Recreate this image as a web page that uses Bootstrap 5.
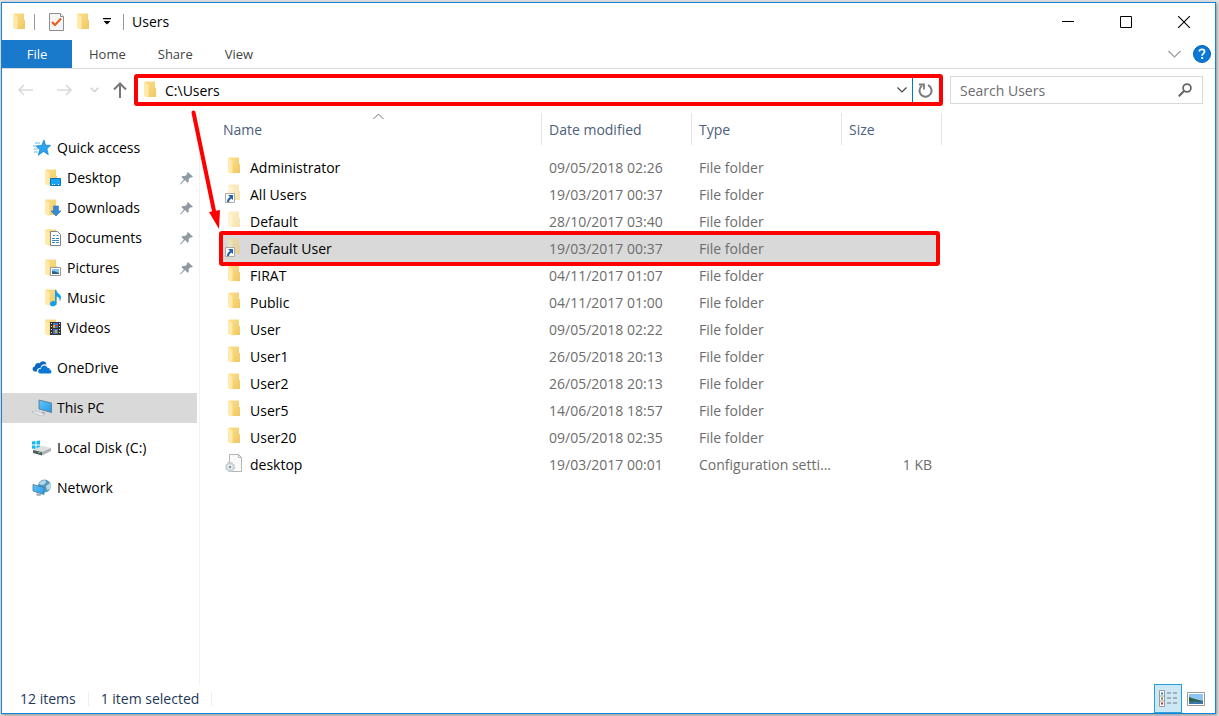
<!DOCTYPE html>
<html lang="en">
<head>
<meta charset="utf-8">
<meta name="viewport" content="width=device-width, initial-scale=1">
<title>Users</title>
<link rel="stylesheet" href="https://cdn.jsdelivr.net/npm/bootstrap@5.3.0/dist/css/bootstrap.min.css">
<style>
  body { background: #e2e2e2; font-family: "Open Sans", "Noto Sans", sans-serif; font-size: 14px; line-height: 20px; color: #000; padding: 2px 3px 2px 1px; }
  svg { display: block; flex: none; }
  button { border: 0; background: none; padding: 0; }
  .explorer { min-height: calc(100vh - 4px); background: #fff; border: 1px solid #1883d7; box-shadow: 1px 1px 3px #888; }
  .title-row { height: 37px; padding: 0 2px 0 11px; }
  .divider { width: 1px; height: 16px; background: #999; }
  .quick-tools { gap: 9px; padding: 0 12px 0 14px; }
  .win-btn { width: 58px; height: 37px; display: grid; place-items: center; }
  .ribbon { height: 29px; border-bottom: 1px solid #dadbdc; }
  .ribbon .nav-link { height: 28px; padding: 4px 16px; font-size: 13px; color: #444; }
  .ribbon .file-tab { width: 70px; background: #1979ca; color: #fff; text-align: center; padding: 4px 0; margin-right: 1px; }
  .address-row { padding: 5px 12px 7px 0; }
  .nav-btn { height: 32px; display: grid; place-items: center; }
  .w-back { width: 48px; } .w-forward { width: 28px; } .w-recent { width: 32px; } .w-up { width: 24px; padding-right: 4px; }
  .address-box { height: 32px; border: 4px solid #f00; border-radius: 3px; background: #fff; padding-left: 6px; }
  .address-box input, .search-box input { border: 0; outline: 0; background: none; padding: 0; min-width: 0; height: 24px; }
  .refresh { width: 27px; padding-right: 1px; border-left: 1px solid #0078d7; }
  .search-box { width: 253px; height: 28px; border: 1px solid #d9d9d9; margin-left: 7px; padding: 0 10px 0 9px; }
  .search-box input::placeholder { color: #6d6d6d; opacity: 1; }
  .side { width: 198px; border-right: 1px solid #f2f2f2; padding-top: 20px; }
  .side a { height: 30px; width: 195px; color: #000; text-decoration: none; display: flex; align-items: center; padding: 0 4px 0 30px; }
  .side a.sub { padding-left: 43px; }
  .side a.picked { background: #d9d9d9; }
  .side a > svg:first-child { margin-right: 5px; }
  .side a.sub > svg:first-child { margin-right: 2px; }
  .side ul + ul { margin-top: 10px; }
  .files { width: 723px; margin-left: 19px; table-layout: fixed; border-collapse: separate; border-spacing: 0; }
  .files th { height: 32px; padding: 2px 7px 0; font-weight: 400; color: #4c607a; border-right: 1px solid #e5e5e5; }
  .files th:first-child { padding-left: 4px; position: relative; }
  .files tbody::before { content: ""; display: block; height: 9px; }
  .files td { height: 27px; padding: 0 7px; color: #6d6d6d; white-space: nowrap; }
  .files td:first-child { color: #000; padding-left: 6px; }
  .files td:last-child { padding-right: 10px; text-align: right; }
  .files tr.chosen { position: relative; background: #d9d9d9; }
  .files tr.chosen::after { content: ""; position: absolute; inset: -4px 2px -4px 0; border: 4px solid #f00; border-radius: 3px; }
  .files tr.chosen td:last-child { border-right: 3px solid #fff; }
  .entry { display: flex; align-items: center; gap: 7px; }
  .faded { opacity: .5; }
  .sort-mark { position: absolute; left: 154px; top: 0; }
  .pointer { position: absolute; left: -12px; top: -6px; }
  .status { height: 29px; color: #1e395b; padding: 0 5px 0 18px; }
  .status .thin { width: 1px; height: 14px; background: #eee; margin: 0 12px; }
  .view-btn { width: 28px; height: 29px; display: grid; place-items: center; }
  .view-btn.on { background: #cce8f6; border: 1px solid #26a0da; }
</style>
</head>
<body>
<svg width="0" height="0" class="position-absolute" aria-hidden="true">
  <defs>
    <linearGradient id="gold" x1="0" x2="1" y1="0" y2="1"><stop offset="0" stop-color="#fbdf8c"/><stop offset="1" stop-color="#f0c862"/></linearGradient>
    <linearGradient id="sky" x1="0" x2="1" y1="0" y2="1"><stop offset="0" stop-color="#65c4fb"/><stop offset="1" stop-color="#219be8"/></linearGradient>
    <symbol id="folder" viewBox="0 0 17 18"><path d="M1 0.500h10v6.500h1v9H2z" fill="url(#gold)"/><path d="M0 .500 4.500 4v13L0 15z" fill="#ffe9ab"/></symbol>
    <symbol id="pin" viewBox="0 0 14 14"><path d="M8.500 0 14 5l-1.500 1-1-.3-2.300 2.200.3 2.600-1.400 1-2.700-2.800L.7 13.500 0 13l4.200-5L1.500 5.300l1.200-1.100 2.800.1 2.300-2.200-.2-1z" fill="#8f9aa3"/></symbol>
    <symbol id="shortcut" viewBox="0 0 10 10"><path d="M.5.500h9v9h-9z" fill="#fff" stroke="#aaa"/><path d="M3 2h5v5L6.500 5.500Q4 6.500 4 9H2Q2 5.500 5 4z" fill="#2461a8"/></symbol>
  </defs>
</svg>

<div class="explorer d-flex flex-column">
  <header>
    <div class="title-row d-flex align-items-center">
      <svg width="17" height="18"><use href="#folder"/></svg>
      <span class="divider ms-1 ps-0"></span>
      <div class="quick-tools d-flex align-items-center">
        <button class="me-1" aria-label="Properties"><svg width="15" height="18" viewBox="0 0 15 18"><path d="M.5.500h11l3 3v14H.5z" fill="#f4f5f7" stroke="#8d8d8d"/><path d="M11.500.500v3h3" fill="#fff" stroke="#8d8d8d"/><path d="m3 9 3 3 6-6.500" fill="none" stroke="#ea5a14" stroke-width="2"/></svg></button>
        <button aria-label="New folder"><svg width="17" height="18"><use href="#folder"/></svg></button>
        <button aria-label="Customize toolbar"><svg width="8" height="7" viewBox="0 0 8 7"><path d="M0 0h8v1.300H0zM.500 3h7L4 6.500z"/></svg></button>
      </div>
      <span class="divider"></span>
      <span class="flex-grow-1 ms-2">Users</span>
      <button class="win-btn" aria-label="Minimize"><svg width="12" height="12" viewBox="0 0 12 12"><path d="M0 5.500h12" stroke="#000"/></svg></button>
      <button class="win-btn" aria-label="Maximize"><svg width="12" height="12" viewBox="0 0 12 12"><path d="M.5.500h11v11H.5z" fill="none" stroke="#000"/></svg></button>
      <button class="win-btn" aria-label="Close"><svg width="12" height="12" viewBox="0 0 12 12"><path d="m0 0 12 12M12 0 0 12" fill="none" stroke="#000" stroke-width="1.100"/></svg></button>
    </div>
    <nav class="ribbon nav flex-nowrap">
      <a class="nav-link file-tab" href="#">File</a>
      <a class="nav-link" href="#">Home</a>
      <a class="nav-link" href="#">Share</a>
      <a class="nav-link" href="#">View</a>
      <div class="ms-auto d-flex align-items-center gap-2 me-1">
        <button class="me-1" aria-label="Collapse ribbon"><svg width="13" height="8" viewBox="0 0 13 8"><path d="m.5 1 6 6 6-6" fill="none" stroke="#999" stroke-width="1.200"/></svg></button>
        <button aria-label="Help"><svg width="18" height="18" viewBox="0 0 18 18"><circle cx="9" cy="9" r="8.500" fill="#0a78d6" stroke="#0562b4"/><path d="M6.300 6.500Q6.500 4.300 9 4.300t2.600 2.200c0 2-2.500 2-2.500 4.300" fill="none" stroke="#fff" stroke-width="1.700"/><path d="M8.200 12h1.900v1.900H8.200z" fill="#fff"/></svg></button>
      </div>
    </nav>
    <div class="address-row d-flex align-items-center">
      <button class="nav-btn w-back" aria-label="Back"><svg width="16" height="12" viewBox="0 0 16 12"><path d="M15 6H1m5-5L1 6l5 5" fill="none" stroke="#dadada" stroke-width="1.600"/></svg></button>
      <button class="nav-btn w-forward" aria-label="Forward"><svg width="16" height="12" viewBox="0 0 16 12"><path d="M1 6h14M10 1l5 5-5 5" fill="none" stroke="#dadada" stroke-width="1.600"/></svg></button>
      <button class="nav-btn w-recent" aria-label="Recent locations"><svg width="9" height="6" viewBox="0 0 9 6"><path d="m.7.700 3.800 4 3.800-4" fill="none" stroke="#d0d0d0" stroke-width="1.500"/></svg></button>
      <button class="nav-btn w-up" aria-label="Up"><svg width="14" height="16" viewBox="0 0 14 16"><path d="M7 16V1.500M1 7.500l6-6 6 6" fill="none" stroke="#777" stroke-width="2"/></svg></button>
      <div class="address-box d-flex flex-grow-1 align-items-center">
        <svg width="17" height="18"><use href="#folder"/></svg>
        <input class="flex-grow-1 ms-1" type="text" value="C:\Users" aria-label="Address">
        <button class="nav-btn px-1" aria-label="Previous locations"><svg width="12" height="6" viewBox="0 0 12 6"><path d="m1.500.500 4.500 4.500L10.500.500" fill="none" stroke="#444" stroke-width="1.200"/></svg></button>
        <button class="refresh h-100 d-flex align-items-center justify-content-center" aria-label="Refresh"><svg width="15" height="15" viewBox="0 0 15 15"><path d="M10 2.200A6 6 0 1 1 4 2.800" fill="none" stroke="#7a7a7a" stroke-width="2"/><path d="M1 1.500h5v5" fill="none" stroke="#7a7a7a" stroke-width="1.800"/></svg></button>
      </div>
      <div class="search-box d-flex align-items-center">
        <input class="flex-grow-1" type="text" placeholder="Search Users" aria-label="Search Users">
        <svg width="14" height="14" viewBox="0 0 14 14"><circle cx="9" cy="5" r="3.900" fill="none" stroke="#666" stroke-width="1.800"/><path d="M6 8 .700 13.300" stroke="#666" stroke-width="2.200"/></svg>
      </div>
    </div>
  </header>

  <main class="d-flex flex-grow-1">
    <nav class="side flex-shrink-0" aria-label="Folders">
      <ul class="list-unstyled mb-0">
        <li><a href="#"><svg width="20" height="18" viewBox="0 0 20 18"><path d="m12 1 1.500 5.300h5L14.800 10l1.500 5.500-4.800-3-5.300 3.700L8 10.500 4 7l5.700-.5z" fill="#2aa4ee" stroke="#1683cb" stroke-width=".8"/><path d="M3 4h5M1 7h3m-2 3h4m-4 3h4" stroke="#63b9ea"/></svg>Quick access</a></li>
        <li><a class="sub" href="#"><svg width="20" height="18" viewBox="0 0 20 18"><use href="#folder" width="17" height="18"/><path d="M5.500 9.500h10v7h-10z" fill="#18a4f5" stroke="#0874b8"/><path d="M7 15.500h1m1 0h1m3 0h1" stroke="#fff"/></svg>Desktop<svg class="ms-auto" width="13" height="13"><use href="#pin"/></svg></a></li>
        <li><a class="sub" href="#"><svg width="20" height="18" viewBox="0 0 20 18"><use href="#folder" width="17" height="18"/><path d="M8.500 7h5v5H16l-5 5-5-5h2.500z" fill="#3689d6" stroke="#2b74ba" stroke-width=".6"/></svg>Downloads<svg class="ms-auto" width="13" height="13"><use href="#pin"/></svg></a></li>
        <li><a class="sub" href="#"><svg width="20" height="18" viewBox="0 0 20 18"><use href="#folder" width="17" height="18"/><path d="M5.500 2.500h7l3 3v11h-10z" fill="#fff" stroke="#7d8589"/><path d="M8 6.500h2m1.500 0h2M7 9.500h3m1 0h3M7 11.500h7m-7 2h3m1 0h3" stroke="#3988bd"/></svg>Documents<svg class="ms-auto" width="13" height="13"><use href="#pin"/></svg></a></li>
        <li><a class="sub" href="#"><svg width="20" height="18" viewBox="0 0 20 18"><use href="#folder" width="17" height="18"/><path d="M5.500 8.500h10v8h-10z" fill="#fff" stroke="#999"/><path d="M7 10h7v5H7z" fill="#82c3ef"/><path d="M7 12q3 0 7 2v1H7z" fill="#2b647c"/></svg>Pictures<svg class="ms-auto" width="13" height="13"><use href="#pin"/></svg></a></li>
        <li><a class="sub" href="#"><svg width="20" height="18" viewBox="0 0 20 18"><use href="#folder" width="17" height="18"/><path d="M10 1h1.500c0 4 4.500 3.500 4.500 7.500q0 2-1.500 4c.5-3-.5-4.500-3-5V14c0 4-6.500 4.500-6.500 1 0-2.500 3-3.500 5-2.500z" fill="#119df0"/></svg>Music</a></li>
        <li><a class="sub" href="#"><svg width="20" height="18" viewBox="0 0 20 18"><use href="#folder" width="17" height="18"/><path d="M5 3h11v13H5z" fill="#38332f"/><path d="M8 4h5v5H8zm0 6h5v5H8z" fill="#3e75cc"/><path d="M8 6h2v3H8zm2 5h2v3h-2z" fill="#d5ae35"/><path d="M10 6h3v1h-3z" fill="#d24833"/><path d="M6.500 4v12m8-12v12" stroke="#ddd" stroke-dasharray="1 2"/></svg>Videos</a></li>
      </ul>
      <ul class="list-unstyled mb-0"><li><a href="#"><svg width="20" height="18" viewBox="0 0 20 18"><path d="M5 12.500H3.500C0 12.500-.5 8 3 7.300 3 4 6.500 3.500 7.500 4.500 9.500 1 14 2 14.500 5.500c-4-1-5.500 1-6 3.500-3 0-4 2-3.500 3.500z" fill="#0b67c2"/><path d="M8.500 14.500c-3.300 0-3.300-4.500.5-4.700.3-4 5.500-4.300 6.300-1 2-.3 2.500 1 2.400 2 2.500.5 2 3.700 0 3.700z" fill="#0978d7"/></svg>OneDrive</a></li></ul>
      <ul class="list-unstyled mb-0"><li><a class="picked" href="#"><svg width="20" height="18" viewBox="0 0 20 18"><path d="m7 1 12.500 3v9.500L7 10z" fill="url(#sky)" stroke="#5c7486" stroke-width=".8"/><path d="m10 13 3 .8v1.500l-3-1z" fill="#8b9aa3"/><path d="m0 13 4-1 9 3-4 2z" fill="#e9edf0" stroke="#a5adb3" stroke-width=".8" stroke-dasharray="2 1"/></svg>This PC</a></li></ul>
      <ul class="list-unstyled mb-0"><li><a href="#"><svg width="20" height="18" viewBox="0 0 20 18"><path d="M0 2.500 3.500 2v3.500H0zM4.500 2 8 1.500v4H4.500zM0 6.500h3.500V10L0 9.500zm4.500 0H8v4L4.500 10z" fill="#19b5ed"/><path d="m1 11 9-4.500 9 2.500-9 4z" fill="#dedfdf"/><path d="m1 11 9 2v3.500L1 14z" fill="#555c5c"/><path d="m10 13 9-4v3l-9 4.500z" fill="#aeb1b1"/><path d="M6.500 13.500h2" stroke="#48d779" stroke-width="1.500"/></svg>Local Disk (C:)</a></li></ul>
      <ul class="list-unstyled mb-0"><li><a href="#"><svg width="20" height="18" viewBox="0 0 20 18"><circle cx="12.500" cy="7" r="6.500" fill="#5a99bf"/><path d="M8 3q4-3 6-1l-1 3-3 1-3-1zm6 4 4-3q2 3 0 6l-3 1z" fill="#b5dbe9"/><path d="m1 5.500 11 3v7L1 12z" fill="url(#sky)" stroke="#437697" stroke-width=".8"/><path d="m5 14 4 1v1.500l-3 .5-2-1z" fill="#a5afb5"/></svg>Network</a></li></ul>
    </nav>

    <section class="position-relative flex-grow-1">
      <table class="files">
        <colgroup><col style="width:323px"><col style="width:150px"><col style="width:150px"><col style="width:100px"></colgroup>
        <thead><tr><th>Name<svg class="sort-mark" width="11" height="7" viewBox="0 0 11 7"><path d="m.5 6 5-5 5 5" fill="none" stroke="#777"/></svg></th><th>Date modified</th><th>Type</th><th>Size</th></tr></thead>
        <tbody>
          <tr><td><div class="entry"><svg width="18" height="21" viewBox="0 0 18 21"><use href="#folder" x="3" width="17" height="18"/></svg>Administrator</div></td><td>09/05/2018 02:26</td><td>File folder</td><td></td></tr>
          <tr><td><div class="entry"><svg width="18" height="21" viewBox="0 0 18 21"><use class="faded" href="#folder" x="3" width="17" height="18"/><use href="#shortcut" y="9" width="10" height="10"/></svg>All Users</div></td><td>19/03/2017 00:37</td><td>File folder</td><td></td></tr>
          <tr><td><div class="entry"><svg width="18" height="21" viewBox="0 0 18 21"><use class="faded" href="#folder" x="3" width="17" height="18"/></svg>Default</div></td><td>28/10/2017 03:40</td><td>File folder</td><td></td></tr>
          <tr class="chosen"><td><div class="entry"><svg width="18" height="21" viewBox="0 0 18 21"><use class="faded" href="#folder" x="3" width="17" height="18"/><use href="#shortcut" y="9" width="10" height="10"/></svg>Default User</div></td><td>19/03/2017 00:37</td><td>File folder</td><td></td></tr>
          <tr><td><div class="entry"><svg width="18" height="21" viewBox="0 0 18 21"><use href="#folder" x="3" width="17" height="18"/></svg>FIRAT</div></td><td>04/11/2017 01:07</td><td>File folder</td><td></td></tr>
          <tr><td><div class="entry"><svg width="18" height="21" viewBox="0 0 18 21"><use href="#folder" x="3" width="17" height="18"/></svg>Public</div></td><td>04/11/2017 01:00</td><td>File folder</td><td></td></tr>
          <tr><td><div class="entry"><svg width="18" height="21" viewBox="0 0 18 21"><use href="#folder" x="3" width="17" height="18"/></svg>User</div></td><td>09/05/2018 02:22</td><td>File folder</td><td></td></tr>
          <tr><td><div class="entry"><svg width="18" height="21" viewBox="0 0 18 21"><use href="#folder" x="3" width="17" height="18"/></svg>User1</div></td><td>26/05/2018 20:13</td><td>File folder</td><td></td></tr>
          <tr><td><div class="entry"><svg width="18" height="21" viewBox="0 0 18 21"><use href="#folder" x="3" width="17" height="18"/></svg>User2</div></td><td>26/05/2018 20:13</td><td>File folder</td><td></td></tr>
          <tr><td><div class="entry"><svg width="18" height="21" viewBox="0 0 18 21"><use href="#folder" x="3" width="17" height="18"/></svg>User5</div></td><td>14/06/2018 18:57</td><td>File folder</td><td></td></tr>
          <tr><td><div class="entry"><svg width="18" height="21" viewBox="0 0 18 21"><use href="#folder" x="3" width="17" height="18"/></svg>User20</div></td><td>09/05/2018 02:35</td><td>File folder</td><td></td></tr>
          <tr><td><div class="entry"><svg width="18" height="21" viewBox="0 0 18 21"><path d="M4.500.500h9l3 3v14h-12z" fill="#fafafa" stroke="#b5b5b5"/><path d="M13.500.500v3h3" fill="none" stroke="#b5b5b5"/><circle cx="5" cy="13" r="3.500" fill="#fff" stroke="#cbd2d6" stroke-width="2"/><circle cx="5" cy="13" r="4.800" fill="none" stroke="#c1c9ce" stroke-dasharray="2 1.800"/><circle cx="5" cy="13" r="1.500" fill="#8e9ba3"/></svg>desktop</div></td><td>19/03/2017 00:01</td><td>Configuration setti...</td><td>1 KB</td></tr>
        </tbody>
      </table>
      <svg class="pointer" width="40" height="124" viewBox="0 0 40 124" aria-hidden="true"><path d="M5.500 5.500 26 104" stroke="#f00" stroke-width="4" stroke-linecap="round"/><path d="m21 105 11-2-1 19z" fill="#f00"/></svg>
    </section>
  </main>

  <footer class="status d-flex align-items-center">
    <span>12 items</span><span class="thin"></span><span>1 item selected</span><span class="thin"></span>
    <button class="view-btn on ms-auto" aria-label="Details view"><svg width="18" height="17" viewBox="0 0 18 17"><path d="M.5.500h5v16h-5zM0 6h6M0 11h6" fill="#fff" stroke="#999"/><path d="M2 2.500h2v2H2z" fill="#3b83a3"/><path d="M2 7.500h2v2H2z" fill="#638344"/><path d="M2 12.500h2v2H2z" fill="#c33"/><path d="M8 3h4m2 0h4M8 8h4m2 0h4M8 13h4m2 0h4" stroke="#777"/></svg></button>
    <button class="view-btn" aria-label="Large icons view"><svg width="18" height="14" viewBox="0 0 18 14"><path d="M.5.500h17v13H.5z" fill="#fff" stroke="#999"/><path d="M2 2h14v10H2z" fill="#8ec3f4"/><path d="M2 5q5 2 14 4v1H2z" fill="#2d6444"/><path d="M2 9.500h14V12H2z" fill="#3a78ac"/></svg></button>
  </footer>
</div>
<script src="https://cdn.jsdelivr.net/npm/bootstrap@5.3.0/dist/js/bootstrap.bundle.min.js"></script>
</body>
</html>
